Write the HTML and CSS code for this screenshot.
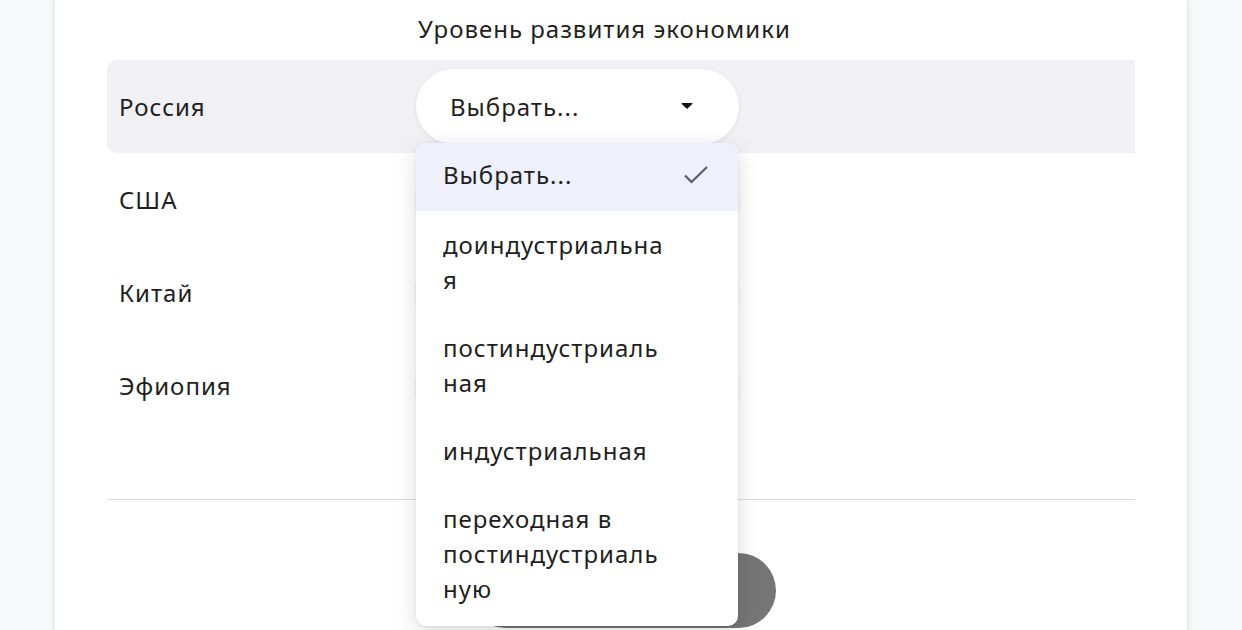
FILE: index.html
```html
<!DOCTYPE html>
<html lang="ru">
<head>
    <meta charset="UTF-8">
    <meta name="viewport" content="width=device-width, initial-scale=1.0">
    <title>Уровень развития экономики</title>
    <link rel="stylesheet" href="styles.css">
</head>
<body>
    <div class="card">
        <div class="quiz">
            <div class="row head">
                <div class="country"></div>
                <div class="answer title">Уровень развития экономики</div>
            </div>

            <div class="row active">
                <div class="country">Россия</div>
                <div class="answer">
                    <div class="select">
                        <span>Выбрать...</span>
                        <svg class="caret" width="12" height="8" viewBox="0 0 12 8"><path d="M1.2 1h9.6c.6 0 .9.7.5 1.1L6.5 6.6c-.3.3-.7.3-1 0L.7 2.1C.3 1.7.6 1 1.2 1z" fill="#111"/></svg>
                    </div>

                    <!-- open list of the first select -->
                    <ul class="menu">
                        <li class="selected">
                            <span>Выбрать...</span>
                            <svg class="tick" width="28" height="22" viewBox="0 0 28 22"><path d="M3 11.5l6.5 6.5L25 3" fill="none" stroke="#5b5e68" stroke-width="2.2"/></svg>
                        </li>
                        <li>доиндустриальная</li>
                        <li>постиндустриальная</li>
                        <li>индустриальная</li>
                        <li>переходная в постиндустриальную</li>
                    </ul>
                </div>
            </div>

            <div class="row">
                <div class="country">США</div>
                <div class="answer"><div class="select"><span>Выбрать...</span></div></div>
            </div>
            <div class="row">
                <div class="country">Китай</div>
                <div class="answer"><div class="select"><span>Выбрать...</span></div></div>
            </div>
            <div class="row">
                <div class="country">Эфиопия</div>
                <div class="answer"><div class="select"><span>Выбрать...</span></div></div>
            </div>
        </div>

        <div class="divider"></div>

        <div class="actions">
            <button class="submit">Проверить ответы</button>
        </div>
    </div>
</body>
</html>
```

FILE: styles.css
```css
/* Page */
body {
    margin: 0;
    background: #f7f8fa;
    font-family: "Noto Sans", "Open Sans", sans-serif;
    font-size: 24px;
    line-height: 35px;
    letter-spacing: 1px;
    color: #1f1f22;
    overflow: hidden;
}

.card {
    width: 1028px;
    min-height: 700px;
    margin-left: 55px;
    padding: 11px 52px 0;
    background: #fff;
    box-shadow: 0 0 6px rgba(0, 0, 0, 0.13);
}

/* Table of countries */
.row {
    display: flex;
    align-items: center;
    height: 93px;
}

.row.head {
    height: 49px;
    align-items: flex-start;
}

.row.active {
    background: #f0f0f5;
    border-radius: 10px 0 0 10px;
}

.country {
    width: 297px;
    padding-left: 12px;
    flex-shrink: 0;
}

.answer {
    position: relative;
    flex: 1;
}

.title {
    padding-left: 2px;
}

/* Select pill */
.select {
    display: flex;
    align-items: center;
    justify-content: space-between;
    box-sizing: border-box;
    width: 323px;
    height: 75px;
    padding: 0 46px 0 34px;
    background: #fff;
    border-radius: 38px;
    box-shadow: 0 1px 4px rgba(0, 0, 0, 0.08);
}

.caret {
    display: block;
    margin-top: -2px;
}

/* Dropdown list */
.menu {
    position: absolute;
    top: 74px;
    left: 0;
    z-index: 5;
    width: 322px;
    margin: 0;
    padding: 0 0 3px;
    list-style: none;
    background: #fff;
    border-radius: 10px;
    overflow: hidden;
    box-shadow: 0 6px 22px rgba(0, 0, 0, 0.14), 0 1px 3px rgba(0, 0, 0, 0.06);
}

.menu li {
    padding: 15.5px 69px 17.5px 27px;
    overflow-wrap: anywhere;
}

.menu li.selected {
    position: relative;
    padding-top: 14px;
    padding-bottom: 19px;
    background: #eef0fb;
}

.tick {
    position: absolute;
    right: 28px;
    top: 21px;
}

.divider {
    height: 1px;
    margin-top: 67px;
    background: #dcdcdc;
}

.actions {
    display: flex;
    justify-content: center;
    padding-top: 53px;
}

.submit {
    width: 308px;
    height: 75px;
    margin-left: 2px;
    border: none;
    border-radius: 38px;
    background: #767676;
    color: #8a8a8a;
    font: inherit;
}
```
